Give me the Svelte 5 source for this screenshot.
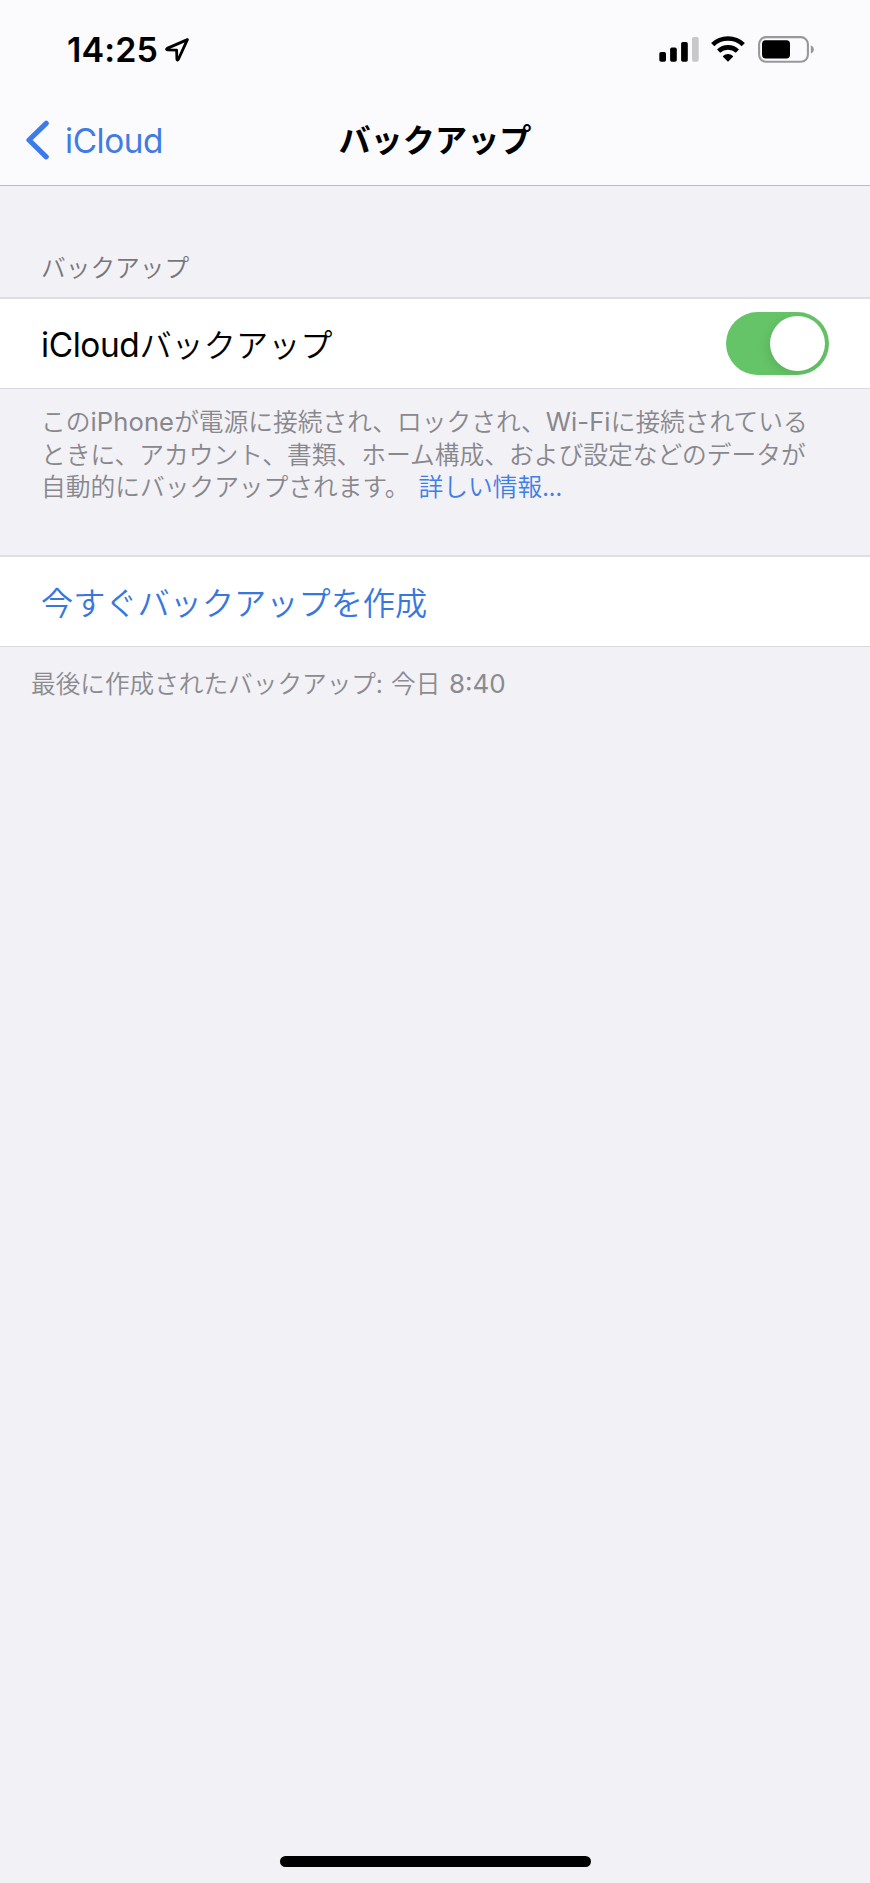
<script>
  let time = '14:25';
  let lastBackup = '8:40';
  let enabled = true;
</script>

<div class="screen">
  <header>
    <div class="status">
      <div class="clock">
        <span>{time}</span>
        <svg width="26" height="26" viewBox="0 0 26 26">
          <path d="M23.4 2.6 3.2 11.4c-1 .5-.8 1.4.2 1.4l9.2.3.3 9.2c0 1 1 1.1 1.4.2z" />
        </svg>
      </div>
      <div class="indicators">
        <svg class="signal" width="41" height="26" viewBox="0 0 41 26">
          <rect x="0.3" y="16" width="6.7" height="9.7" rx="1.8" />
          <rect x="11.1" y="11.5" width="6.7" height="14.2" rx="1.8" />
          <rect x="22.1" y="6" width="6.7" height="19.7" rx="1.8" />
          <rect class="off" x="33" y="1" width="6.7" height="24.7" rx="1.8" />
        </svg>
        <svg class="wifi" width="34" height="26" viewBox="0 0 34 26">
          <path class="arc" d="M1.7 8.6a22.2 22.2 0 0 1 30.6 0" />
          <path class="arc" d="M7.6 15.1a13.7 13.7 0 0 1 18.8 0" />
          <path d="M12 19.9a7.4 7.4 0 0 1 10 0q.4.4 0 .8l-4.4 4.5q-.6.6-1.2 0L12 20.7q-.4-.4 0-.8z" />
        </svg>
        <svg class="battery" width="56" height="27" viewBox="0 0 56 27">
          <rect class="shell" x="1.1" y="1.1" width="48.8" height="24.6" rx="7" />
          <rect x="4" y="4.2" width="28" height="18.2" rx="3.6" />
          <path class="cap" d="M52.8 9.6q3 1 3 3.9t-3 3.9z" />
        </svg>
      </div>
    </div>
    <nav>
      <div class="back">
        <svg width="24" height="40" viewBox="0 0 24 40">
          <path d="M21.2 3.3 4 20l17.2 16.8" />
        </svg>
        <span class="latin">iCloud</span>
      </div>
      <h1>バックアップ</h1>
    </nav>
  </header>

  <h2>バックアップ</h2>
  <div class="row">
    <span class="label"><span class="latin">iCloud</span>バックアップ</span>
    <div class="toggle" class:enabled>
      <div class="knob"></div>
    </div>
  </div>
  <p class="note">
    この<span class="latin">iPhone</span>が電源に接続され、ロックされ、<span class="latin">Wi-Fi</span>に接続されている<br />
    ときに、アカウント、書類、ホーム構成、および設定などのデータが<br />
    自動的にバックアップされます。<span class="link">詳しい情報...</span>
  </p>

  <div class="row action"><span class="label">今すぐバックアップを作成</span></div>
  <p class="last">最後に作成されたバックアップ: 今日 <span class="latin">{lastBackup}</span></p>

  <div class="home"></div>
</div>

<style>
  :global(body) {
    margin: 0;
    background: #f1f1f6;
  }
  .screen {
    box-sizing: border-box;
    display: flex;
    flex-direction: column;
    width: 870px;
    height: 1883px;
    padding-bottom: 16px;
    overflow: hidden;
    background: #f1f1f6;
    color: #000;
    font-family: "Noto Sans CJK JP", sans-serif;
    font-weight: 350;
    font-size: 32.2px;
    white-space: nowrap;
  }
  svg {
    display: block;
    flex: none;
  }
  header {
    box-sizing: border-box;
    height: 186px;
    background: #fbfbfd;
    border-bottom: 1px solid #bcbcc0;
  }
  .latin {
    font-family: Inter, sans-serif;
    font-weight: 400;
    line-height: 1;
  }

  .status {
    display: flex;
    justify-content: space-between;
    height: 98px;
    padding: 0 56px 0 67px;
  }
  .clock {
    display: flex;
    height: 98px;
    align-items: center;
    font-family: Inter, sans-serif;
    font-size: 34px;
    font-weight: 600;
    gap: 6px;
  }
  .clock span {
    width: 91px;
    letter-spacing: 0.1px;
  }
  .clock svg {
    position: relative;
    top: 1px;
    fill: none;
    stroke: #000;
    stroke-width: 2.8;
    stroke-linejoin: round;
  }
  .indicators {
    display: flex;
    align-items: center;
    height: 98px;
  }
  .off {
    fill: #c8c8ca;
  }
  .wifi {
    margin: 0 12px 0 11px;
  }
  .battery {
    margin-left: 1px;
  }
  .arc {
    fill: none;
    stroke: #000;
    stroke-width: 4.6;
  }
  .shell {
    fill: none;
    stroke: #98989b;
    stroke-width: 2.1;
  }
  .cap {
    fill: #98989b;
  }

  nav {
    display: grid;
    grid-template-columns: 1fr auto 1fr;
    align-items: center;
    height: 84px;
    padding: 0 25px;
  }
  .back {
    display: flex;
    align-items: center;
    gap: 16px;
    color: #3f7ce3;
    font-size: 33.4px;
    letter-spacing: -0.45px;
  }
  .back .latin {
    padding-top: 3px;
  }
  .back svg {
    fill: none;
    stroke: #3b7bea;
    stroke-width: 5.2;
    stroke-linecap: round;
    stroke-linejoin: round;
  }
  h1 {
    margin: 0;
    padding-bottom: 4px;
    font-size: 32.2px;
    font-weight: 700;
    line-height: 80px;
  }

  h2 {
    margin: 0;
    padding: 60px 0 0 41px;
    height: 51px;
    color: #77767b;
    font-size: 24.7px;
    font-weight: 350;
    line-height: 40px;
  }
  .row {
    box-sizing: border-box;
    display: flex;
    flex: none;
    align-items: center;
    justify-content: space-between;
    height: 92px;
    padding: 0 41px;
    border-top: 2px solid #dfdee3;
    border-bottom: 1px solid #d9d8dd;
    background: #fff;
  }
  .label {
    padding-bottom: 2px;
  }
  .row .latin {
    font-size: 33.4px;
    letter-spacing: -0.4px;
  }
  .toggle {
    box-sizing: border-box;
    display: flex;
    width: 103px;
    height: 63px;
    padding: 4px;
    border-radius: 32px;
    background: #dedee2;
  }
  .enabled {
    justify-content: flex-end;
    background: #66c468;
  }
  .knob {
    width: 55px;
    height: 55px;
    border-radius: 50%;
    background: #fff;
    box-shadow: -2px 3px 11px rgba(0, 50, 0, 0.12);
  }
  .note {
    flex: none;
    height: 151px;
    margin: 0;
    padding: 15px 0 0 41px;
    color: #88878c;
    font-size: 24.74px;
    line-height: 32.7px;
  }
  .note .latin {
    font-size: 25.6px;
    font-weight: 380;
    letter-spacing: 0.1px;
  }
  .link {
    margin-left: 9px;
    color: #3f7ee6;
  }
  .action {
    color: #3877de;
  }
  .last {
    margin: 0;
    padding: 15px 0 0 31px;
    color: #8b8a8f;
    font-size: 24.65px;
    line-height: 40px;
    word-spacing: 3px;
  }
  .last .latin {
    font-size: 26px;
    font-weight: 380;
  }
  .home {
    width: 311px;
    height: 11px;
    margin: auto auto 0;
    border-radius: 6px;
    background: #000;
  }
</style>
